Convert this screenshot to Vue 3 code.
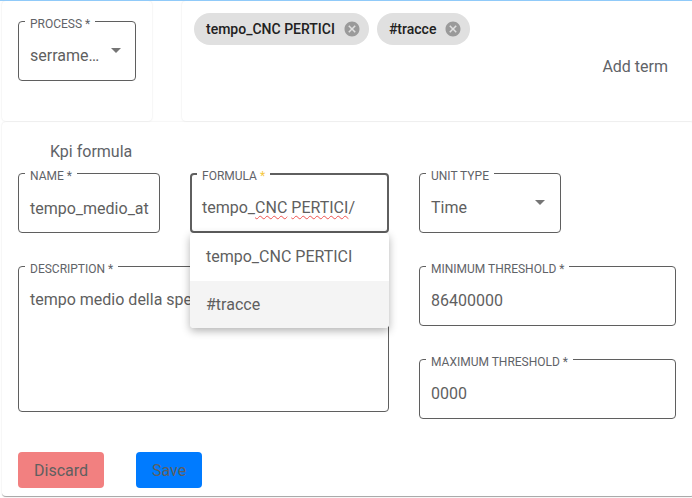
<template>
  <div class="page">
    <div class="top-row">
      <div class="card process-card">
        <div class="field process-field">
          <span class="field-label">PROCESS *</span>
          <span class="value">serrame…</span>
          <span class="caret"></span>
        </div>
      </div>
      <div class="card terms-card">
        <div class="chips">
          <div v-for="term in terms" :key="term" class="chip">
            <span>{{ term }}</span>
            <svg class="chip-x" viewBox="0 0 24 24">
              <path d="M12 2C6.47 2 2 6.47 2 12s4.47 10 10 10 10-4.47 10-10S17.53 2 12 2zm5 13.59L15.59 17 12 13.41 8.41 17 7 15.59 10.59 12 7 8.41 8.41 7 12 10.59 15.59 7 17 8.41 13.41 12 17 15.59z" />
            </svg>
          </div>
        </div>
        <button class="add-term">Add term</button>
      </div>
    </div>

    <div class="card form-card">
      <div class="form-title">Kpi formula</div>
      <div class="form-body">
        <div class="left-col">
          <div class="left-top">
            <div class="field name-field">
              <span class="field-label">NAME *</span>
              <span class="value">tempo_medio_at</span>
            </div>
            <div class="formula-wrap">
              <div class="field focused">
                <span class="field-label">FORMULA <i>*</i></span>
                <span class="value">tempo_<span class="typo">CNC</span> <span class="typo">PERTICI</span>/</span>
              </div>
              <ul class="menu">
                <li v-for="(term, i) in terms" :key="term" :class="{ active: i === 1 }">{{ term }}</li>
              </ul>
            </div>
          </div>
          <div class="field description">
            <span class="field-label">DESCRIPTION *</span>
            <span class="value">tempo medio della spesa</span>
          </div>
        </div>
        <div class="right-col">
          <div class="field unit-field">
            <span class="field-label">UNIT TYPE</span>
            <span class="value">Time</span>
            <span class="caret"></span>
          </div>
          <div class="field">
            <span class="field-label">MINIMUM THRESHOLD *</span>
            <span class="value">86400000</span>
          </div>
          <div class="field">
            <span class="field-label">MAXIMUM THRESHOLD *</span>
            <span class="value">0000</span>
          </div>
        </div>
      </div>
      <div class="actions">
        <button class="btn btn-discard">Discard</button>
        <button class="btn btn-save">Save</button>
      </div>
    </div>
  </div>
</template>

<script setup>
const terms = ['tempo_CNC PERTICI', '#tracce'];
</script>

<style>
body {
  margin: 0;
  background: #fff;
}
</style>

<style scoped>
.page {
  width: 692px;
  height: 498px;
  box-sizing: border-box;
  border-top: 1px solid #90caf9;
  padding-left: 2px;
  overflow: hidden;
  font-family: Roboto, sans-serif;
  color: #5f6368;
  background: #fff;
}

.top-row {
  display: flex;
  gap: 30px;
  height: 120px;
}

.card {
  background: #fff;
  border-radius: 4px;
  box-shadow: 0 0 2px rgba(0, 0, 0, 0.12);
}

.process-card {
  width: 150px;
  box-sizing: border-box;
  padding: 20px 16px 0;
}

.terms-card {
  flex: 1;
  padding: 12px 12px 0 12px;
  margin-right: -2px;
}

.chips {
  display: flex;
  gap: 8px;
}

.chip {
  display: flex;
  align-items: center;
  height: 32px;
  padding: 0 8px 0 12px;
  gap: 8px;
  border-radius: 16px;
  background: #e0e0e0;
  color: #212121;
  font-size: 14px;
  font-weight: 500;
}

.chip-x {
  width: 18px;
  height: 18px;
  fill: #9a9a9a;
}

.add-term {
  display: block;
  margin: 10px 14px 0 auto;
  padding: 0;
  border: none;
  background: none;
  font: inherit;
  font-size: 16px;
  line-height: 24px;
  color: #5f6368;
}

.form-card {
  height: 375px;
  box-sizing: border-box;
  margin-top: 1px;
  margin-right: -2px;
  padding: 20px 16px 0;
  border-bottom: 1px solid #aaa;
}

.form-title {
  padding-left: 32px;
  font-size: 16px;
  line-height: 20px;
  height: 31px;
}

.form-body {
  display: flex;
  gap: 30px;
}

.field {
  position: relative;
  box-sizing: border-box;
  height: 60px;
  padding: 0 11px;
  display: flex;
  align-items: center;
  border: 1px solid #5f5f5f;
  border-radius: 4px;
  font-size: 16px;
  white-space: nowrap;
}

.field-label {
  position: absolute;
  left: 6px;
  top: -5px;
  padding: 0 5px;
  height: 12px;
  font-size: 12px;
  line-height: 14px;
  background: #fff;
  color: #5f6368;
}

.field-label i {
  font-style: normal;
  color: #f5c842;
}

.value {
  color: #5f5f5f;
  line-height: 24px;
  padding-top: 10px;
}

.caret {
  position: absolute;
  right: 15px;
  top: 26px;
  border-left: 5px solid transparent;
  border-right: 5px solid transparent;
  border-top: 5px solid #757575;
}

.process-field {
  width: 118px;
}

.process-field .caret {
  right: 14px;
}

.left-col {
  width: 371px;
}

.left-top {
  display: flex;
  gap: 30px;
}

.name-field {
  width: 142px;
}

.name-field .value {
  padding-top: 12px;
}

.formula-wrap {
  position: relative;
  width: 199px;
}

.focused {
  border: 2px solid #5f5f5f;
  padding: 0 10px;
}

.focused .field-label {
  left: 5px;
  top: -6px;
}

.typo {
  text-decoration: underline wavy #ef5350 1px;
  text-underline-offset: 2px;
}

.menu {
  position: absolute;
  z-index: 2;
  left: 0;
  right: 0;
  top: 60px;
  height: 95px;
  margin: 0;
  padding: 0;
  list-style: none;
  background: #fff;
  border-radius: 4px;
  box-shadow: 0 3px 8px rgba(0, 0, 0, 0.3);
  overflow: hidden;
}

.menu li {
  height: 48px;
  padding: 0 16px;
  line-height: 48px;
  font-size: 16px;
  color: #5f5f5f;
}

.menu li.active {
  background: #f4f4f4;
}

.description {
  height: 146px;
  margin-top: 33px;
  align-items: flex-start;
  padding-top: 21px;
}

.description .value {
  padding-top: 0;
}

.right-col {
  width: 257px;
  display: flex;
  flex-direction: column;
  gap: 33px;
}

.unit-field {
  width: 142px;
}

.actions {
  display: flex;
  gap: 32px;
  margin-top: 33px;
}

.btn {
  height: 36px;
  padding: 0 16px;
  border: none;
  border-radius: 4px;
  font-family: inherit;
  font-size: 16px;
  color: #5f5f5f;
}

.btn-discard {
  background: #f28080;
}

.btn-save {
  background: #007bff;
}
</style>
